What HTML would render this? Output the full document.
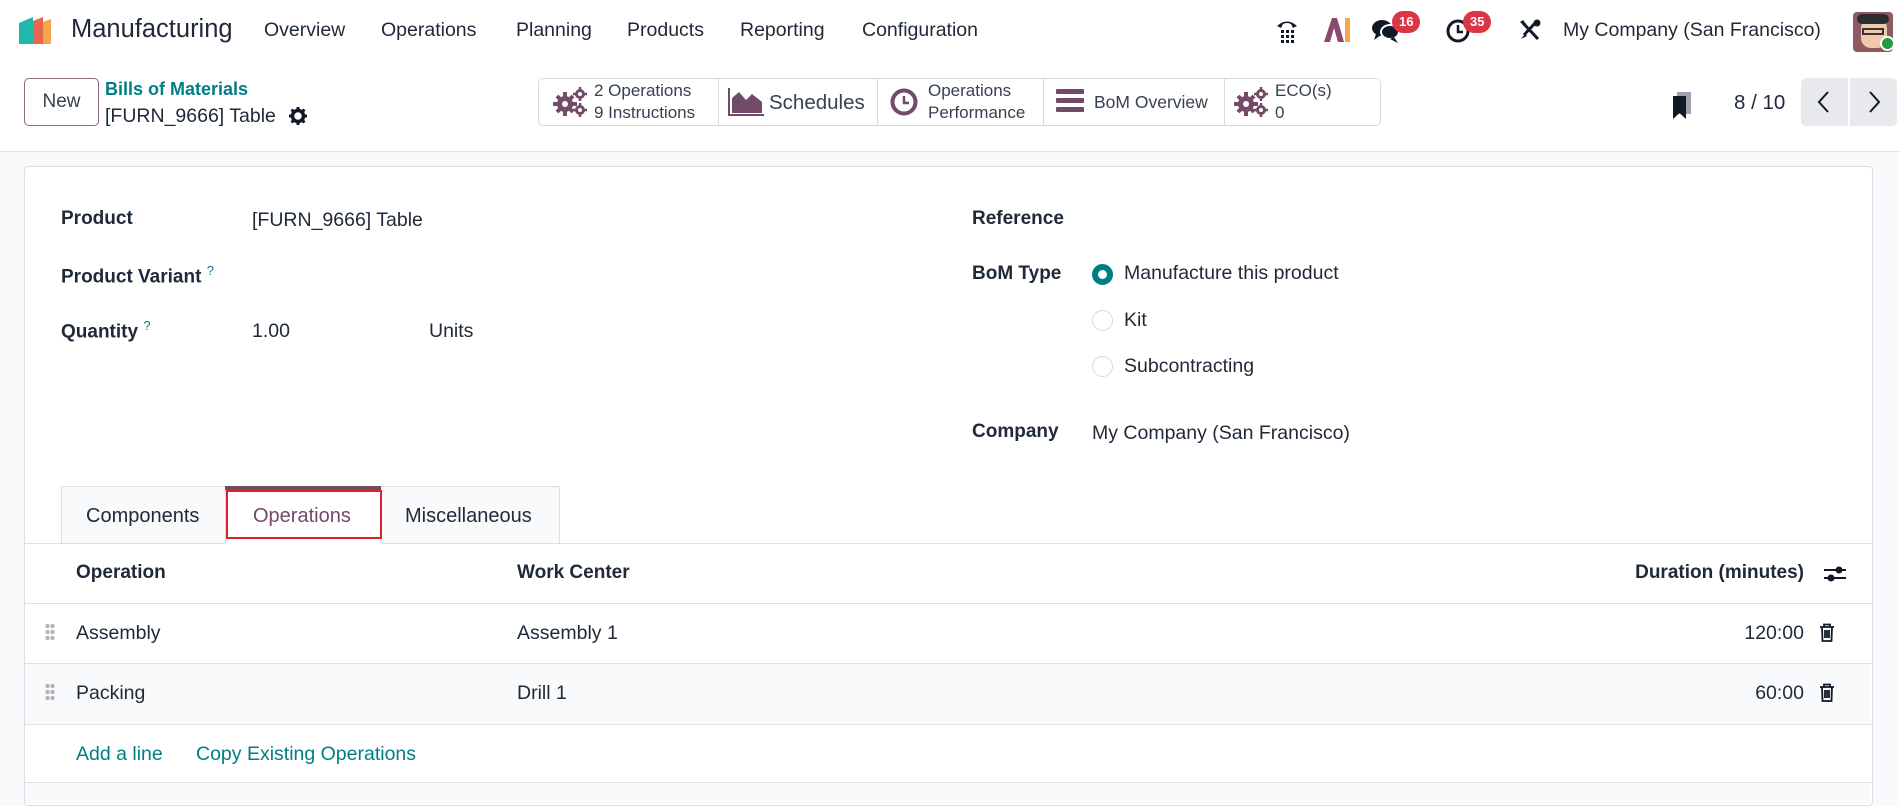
<!DOCTYPE html>
<html><head><meta charset="utf-8"><style>
*{box-sizing:border-box;margin:0;padding:0}
body{width:1899px;height:798px;overflow:hidden;background:#f9fafb;font-family:"Liberation Sans",sans-serif;color:#212529;position:relative}
.a{position:absolute;white-space:nowrap}
.top{position:absolute;left:0;top:0;width:1899px;height:152px;background:#fff;border-bottom:1px solid #dee2e6}
.nav{font-size:19.5px;top:19px;color:#1f2937}
.lbl{font-weight:bold;font-size:19px;color:#1f2937}
.val{font-size:19.5px;color:#1f2937}
.bb{position:absolute;top:78px;height:48px;border-left:1px solid #d8dadd;font-size:16.5px;line-height:22px;color:#374151}
.badge{position:absolute;background:#dc3545;color:#fff;font-size:13px;font-weight:bold;border-radius:12px;height:22px;line-height:22px;padding:0 7px}
.radio{position:absolute;width:21px;height:21px;border-radius:50%;border:1.5px solid #d5d8dc;background:#fff}
.hline{position:absolute;left:24px;width:1848px;height:1px;background:#dcdfe3}
.handle{position:absolute;width:10px;height:18px;background-image:radial-gradient(circle,#b0b3b8 2px,transparent 2.3px);background-size:5px 6px}
.r{text-align:right}
</style></head><body>
<div class="top"></div>
<svg class="a" style="left:19px;top:17px" width="42" height="27" viewBox="0 0 42 27">
<polygon points="0,6 14,0 14,27 0,27" fill="#21b8a8"/>
<polygon points="14,4 24,0 24,27 14,27" fill="#e5674e"/>
<polygon points="24,5 32,2 32,27 24,27" fill="#f5a54a"/>
</svg>
<div class="a" style="left:71px;top:15px;font-size:25.5px;color:#1f2937">Manufacturing</div>
<div class="a nav" style="left:264px">Overview</div>
<div class="a nav" style="left:381px">Operations</div>
<div class="a nav" style="left:516px">Planning</div>
<div class="a nav" style="left:627px">Products</div>
<div class="a nav" style="left:740px">Reporting</div>
<div class="a nav" style="left:862px">Configuration</div>
<svg class="a" style="left:1275px;top:17px" width="24" height="26" viewBox="0 0 24 26"><path d="M2 9 Q12 0 22 9 L18 11 L16 7 Q12 5 8 7 L6 11Z" fill="#111827"/><g fill="#111827"><rect x="6" y="13" width="3" height="3"/><rect x="11" y="13" width="3" height="3"/><rect x="16" y="13" width="3" height="3"/><rect x="6" y="18" width="3" height="3"/><rect x="11" y="18" width="3" height="3"/><rect x="16" y="18" width="3" height="3"/><rect x="6" y="23" width="3" height="3"/><rect x="11" y="23" width="3" height="3"/><rect x="16" y="23" width="3" height="3"/></g></svg>
<svg class="a" style="left:1324px;top:18px" width="28" height="24" viewBox="0 0 28 24"><polygon points="0,24 8,0 13,0 20,24 14,24 10,10 6,24" fill="#8a4a6e"/><rect x="21" y="0" width="5" height="24" fill="#f5a54a"/></svg>
<svg class="a" style="left:1372px;top:18px" width="28" height="26" viewBox="0 0 28 26"><ellipse cx="10" cy="10" rx="10" ry="8" fill="#111827"/><path d="M4 16 L2 22 L9 17Z" fill="#111827"/><ellipse cx="18" cy="14" rx="9" ry="7" fill="#111827" stroke="#fff" stroke-width="2"/><path d="M22 19 L26 25 L18 21Z" fill="#111827"/></svg>
<div class="badge" style="left:1392px;top:11px">16</div>
<svg class="a" style="left:1446px;top:18px" width="26" height="26" viewBox="0 0 26 26"><circle cx="12" cy="13" r="10" fill="none" stroke="#111827" stroke-width="3"/><path d="M12 7V14H17" stroke="#111827" stroke-width="2.5" fill="none"/></svg>
<div class="badge" style="left:1463px;top:11px">35</div>
<svg class="a" style="left:1519px;top:19px" width="22" height="22" viewBox="0 0 22 22"><path d="M4 4L19 20" stroke="#111827" stroke-width="3"/><path d="M1 3L4 1L7 5L5 7Z" fill="#111827"/><path d="M18 2L5 16" stroke="#111827" stroke-width="3"/><circle cx="18" cy="4" r="3.5" fill="#111827"/><path d="M2 20L6 15L8 17Z" fill="#111827"/></svg>
<div class="a" style="left:1563px;top:19px;font-size:19.5px;color:#1f2937">My Company (San Francisco)</div>
<div class="a" style="left:1853px;top:12px;width:40px;height:40px;border-radius:4px;background:#8d5a5f;overflow:hidden"><div style="position:absolute;left:8px;top:6px;width:26px;height:30px;border-radius:10px;background:#f2c9a8"></div><div style="position:absolute;left:4px;top:2px;width:32px;height:10px;background:#2b2b33;border-radius:6px"></div><div style="position:absolute;left:9px;top:16px;width:22px;height:7px;border:2px solid #333"></div></div>
<div class="a" style="left:1880px;top:36px;width:15px;height:15px;border-radius:50%;background:#1f9d40;border:2px solid #fff"></div>
<div class="a" style="left:24px;top:78px;width:75px;height:48px;border:1px solid #8b6c82;border-radius:5px;font-size:19px;line-height:46px;text-align:center;color:#374151">New</div>
<div class="a" style="left:105px;top:79px;font-size:18px;font-weight:bold;color:#017e84">Bills of Materials</div>
<div class="a" style="left:105px;top:105px;font-size:19.5px;color:#1f2937">[FURN_9666] Table</div>
<svg class="a" style="left:289px;top:107px" width="18" height="18" viewBox="0 0 18 18"><circle cx="9" cy="9" r="5.5" fill="none" stroke="#111827" stroke-width="3.5"/><g stroke="#111827" stroke-width="3"><path d="M9 0V4M9 14V18M0 9H4M14 9H18M2.5 2.5L5 5M13 13L15.5 15.5M15.5 2.5L13 5M2.5 15.5L5 13"/></g></svg>
<div class="a" style="left:538px;top:78px;width:843px;height:48px;border:1px solid #d8dadd;border-radius:5px;background:#fff"></div>
<svg class="a" style="left:553px;top:86px" width="36" height="32" viewBox="0 0 36 32"><g fill="#714b67"><circle cx="12" cy="18" r="8"/><circle cx="27" cy="8" r="5"/><circle cx="27" cy="24" r="5"/></g><g stroke="#714b67" stroke-width="4"><path d="M12 6V30M0 18H24M4 10L20 26M20 10L4 26"/></g><g stroke="#714b67" stroke-width="2.5"><path d="M27 1V15M20 8H34M27 17V31M20 24H34"/></g><circle cx="12" cy="18" r="3" fill="#fff"/><circle cx="27" cy="8" r="2" fill="#fff"/><circle cx="27" cy="24" r="2" fill="#fff"/></svg>
<div class="a" style="left:594px;top:80px;font-size:17px;line-height:22px;color:#374151">2 Operations<br>9 Instructions</div>
<div class="bb" style="left:718px;width:159px"></div>
<svg class="a" style="left:728px;top:88px" width="36" height="28" viewBox="0 0 36 28"><path d="M1 0V27H36" stroke="#714b67" stroke-width="2" fill="none"/><path d="M4 25V10L11 4L18 12L24 6L34 14V25Z" fill="#714b67"/></svg>
<div class="a" style="left:769px;top:91px;font-size:20.5px;color:#374151">Schedules</div>
<div class="bb" style="left:877px;width:166px"></div>
<svg class="a" style="left:890px;top:88px" width="28" height="28" viewBox="0 0 28 28"><circle cx="14" cy="14" r="11.5" fill="none" stroke="#714b67" stroke-width="4"/><path d="M14 8V15H19" stroke="#714b67" stroke-width="2.5" fill="none"/></svg>
<div class="a" style="left:928px;top:80px;font-size:17px;line-height:22px;color:#374151">Operations<br>Performance</div>
<div class="bb" style="left:1043px;width:181px"></div>
<svg class="a" style="left:1056px;top:89px" width="28" height="24" viewBox="0 0 28 24"><g fill="#714b67"><rect x="0" y="0" width="28" height="5" rx="1"/><rect x="0" y="9" width="28" height="5" rx="1"/><rect x="0" y="18" width="28" height="5" rx="1"/></g></svg>
<div class="a" style="left:1094px;top:92px;font-size:17.5px;color:#374151">BoM Overview</div>
<div class="bb" style="left:1224px;width:157px"></div>
<svg class="a" style="left:1234px;top:86px" width="36" height="32" viewBox="0 0 36 32"><g fill="#714b67"><circle cx="12" cy="18" r="8"/><circle cx="27" cy="8" r="5"/><circle cx="27" cy="24" r="5"/></g><g stroke="#714b67" stroke-width="4"><path d="M12 6V30M0 18H24M4 10L20 26M20 10L4 26"/></g><g stroke="#714b67" stroke-width="2.5"><path d="M27 1V15M20 8H34M27 17V31M20 24H34"/></g><circle cx="12" cy="18" r="3" fill="#fff"/><circle cx="27" cy="8" r="2" fill="#fff"/><circle cx="27" cy="24" r="2" fill="#fff"/></svg>
<div class="a" style="left:1275px;top:80px;font-size:17px;line-height:22px;color:#374151">ECO(s)<br>0</div>
<svg class="a" style="left:1671px;top:92px" width="22" height="28" viewBox="0 0 22 28"><rect x="6" y="0" width="14" height="22" fill="#9ca3af"/><path d="M2 4H15V27L8.5 21L2 27Z" fill="#111827"/></svg>
<div class="a" style="left:1734px;top:91px;font-size:20.5px;color:#1f2937">8 / 10</div>
<div class="a" style="left:1801px;top:78px;width:96px;height:48px;background:#e7e9ed;border-radius:5px"></div>
<div class="a" style="left:1848px;top:78px;width:2px;height:48px;background:#fff"></div>
<svg class="a" style="left:1816px;top:91px" width="16" height="22" viewBox="0 0 16 22"><path d="M12 1L3 11L12 21" stroke="#111827" stroke-width="2" fill="none"/></svg>
<svg class="a" style="left:1866px;top:91px" width="16" height="22" viewBox="0 0 16 22"><path d="M4 1L13 11L4 21" stroke="#111827" stroke-width="2" fill="none"/></svg>
<div class="a" style="left:24px;top:166px;width:1849px;height:640px;background:#fff;border:1px solid #dcdfe3;border-radius:4px"></div>
<div class="a lbl" style="left:61px;top:208px">Product</div>
<div class="a val" style="left:252px;top:209px">[FURN_9666] Table</div>
<div class="a lbl" style="left:61px;top:263px">Product Variant <sup style="color:#017e84;font-size:13px;font-weight:normal">?</sup></div>
<div class="a lbl" style="left:61px;top:318px">Quantity <sup style="color:#017e84;font-size:13px;font-weight:normal">?</sup></div>
<div class="a val" style="left:252px;top:320px">1.00</div>
<div class="a val" style="left:429px;top:320px">Units</div>
<div class="a lbl" style="left:972px;top:208px">Reference</div>
<div class="a lbl" style="left:972px;top:263px">BoM Type</div>
<div class="radio" style="left:1092px;top:264px;border:6px solid #017e84"></div>
<div class="a val" style="left:1124px;top:262px">Manufacture this product</div>
<div class="radio" style="left:1092px;top:310px"></div>
<div class="a val" style="left:1124px;top:309px">Kit</div>
<div class="radio" style="left:1092px;top:356px"></div>
<div class="a val" style="left:1124px;top:355px">Subcontracting</div>
<div class="a lbl" style="left:972px;top:421px">Company</div>
<div class="a val" style="left:1092px;top:422px">My Company (San Francisco)</div>
<div class="a" style="left:61px;top:486px;width:499px;height:58px;background:#f9fafb;border:1px solid #dcdfe3;border-bottom:none"></div>
<div class="a" style="left:225px;top:486px;width:156px;height:58px;background:#fff;border-left:1px solid #dcdfe3;border-right:1px solid #dcdfe3"></div>
<div class="a" style="left:225px;top:486px;width:156px;height:4px;background:#714b67"></div>
<div class="hline" style="top:543px"></div>
<div class="a" style="left:225px;top:543px;width:156px;height:2px;background:#fff"></div>
<div class="a" style="left:86px;top:505px;font-size:20px;color:#1f2937">Components</div>
<div class="a" style="left:253px;top:505px;font-size:20px;color:#714b67">Operations</div>
<div class="a" style="left:405px;top:505px;font-size:20px;color:#1f2937">Miscellaneous</div>
<div class="a" style="left:226px;top:490px;width:156px;height:49px;border:2px solid #e0202a"></div>
<div class="a lbl" style="left:76px;top:562px">Operation</div>
<div class="a lbl" style="left:517px;top:562px">Work Center</div>
<div class="a lbl r" style="left:1500px;width:1304px;width:304px;top:562px">Duration (minutes)</div>
<svg class="a" style="left:1824px;top:564px" width="22" height="20" viewBox="0 0 22 20"><path d="M0 6H22M0 14H22" stroke="#111827" stroke-width="2"/><circle cx="15" cy="6" r="3.5" fill="#111827"/><circle cx="7" cy="14" r="3.5" fill="#111827"/></svg>
<div class="hline" style="top:603px"></div>
<div class="handle" style="left:45px;top:623px"></div>
<div class="a val" style="left:76px;top:622px">Assembly</div>
<div class="a val" style="left:517px;top:622px">Assembly 1</div>
<div class="a val r" style="left:1600px;width:204px;top:622px">120:00</div>
<svg class="a" style="left:1819px;top:623px" width="16" height="19" viewBox="0 0 16 19"><path d="M1 4H15M5 4V1.5H11V4M3 4L3.5 18H12.5L13 4M6 7V15M8 7V15M10 7V15" stroke="#111827" stroke-width="1.8" fill="none"/></svg>
<div class="hline" style="top:663px"></div>
<div class="a" style="left:25px;top:664px;width:1846px;height:60px;background:#f9fafb"></div>
<div class="handle" style="left:45px;top:683px"></div>
<div class="a val" style="left:76px;top:682px">Packing</div>
<div class="a val" style="left:517px;top:682px">Drill 1</div>
<div class="a val r" style="left:1600px;width:204px;top:682px">60:00</div>
<svg class="a" style="left:1819px;top:683px" width="16" height="19" viewBox="0 0 16 19"><path d="M1 4H15M5 4V1.5H11V4M3 4L3.5 18H12.5L13 4M6 7V15M8 7V15M10 7V15" stroke="#111827" stroke-width="1.8" fill="none"/></svg>
<div class="hline" style="top:724px"></div>
<div class="a" style="left:76px;top:743px;font-size:19.5px;color:#017e84">Add a line</div>
<div class="a" style="left:196px;top:743px;font-size:19.5px;color:#017e84">Copy Existing Operations</div>
<div class="hline" style="top:782px"></div>
<div class="a" style="left:25px;top:783px;width:1846px;height:20px;background:#f9fafb"></div>
</body></html>
